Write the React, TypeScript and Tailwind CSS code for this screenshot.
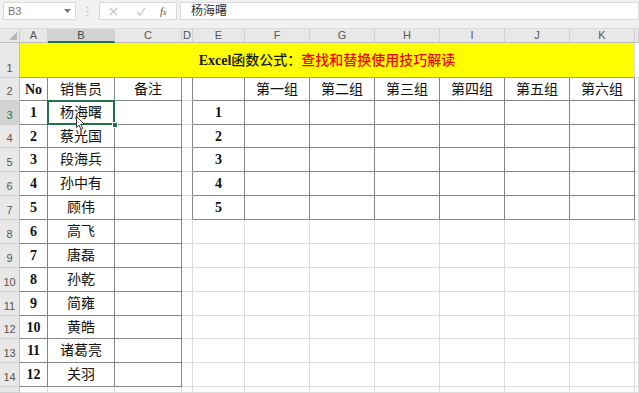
import React from "react";

const colW = [
  "w-[28px]",
  "w-[67px]",
  "w-[67px]",
  "w-[11px]",
  "w-[52px]",
  "w-[65px]",
  "w-[65px]",
  "w-[65px]",
  "w-[65px]",
  "w-[65px]",
  "w-[65px]",
  "w-[4px]",
];
const letters = ["A", "B", "C", "D", "E", "F", "G", "H", "I", "J", "K", ""];
const rowHeights = [23, 24, 23, 24, 24, 24, 24, 24, 24, 24, 23, 24, 24];
const names = [
  "杨海曙",
  "蔡光国",
  "段海兵",
  "孙中有",
  "顾伟",
  "高飞",
  "唐磊",
  "孙乾",
  "简雍",
  "黄皓",
  "诸葛亮",
  "关羽",
];
const groups = ["第一组", "第二组", "第三组", "第四组", "第五组", "第六组"];

const serif = "font-['Liberation_Serif','Noto_Sans_CJK_SC',serif]";
const sans = "font-['Liberation_Sans','Noto_Sans_CJK_SC',sans-serif]";

function cellContent(r: number, c: number): React.ReactNode {
  if (r === 2) {
    if (c === 0) return <span className="font-bold">No</span>;
    if (c === 1) return <span>销售员</span>;
    if (c === 2) return <span>备注</span>;
    if (c >= 5 && c <= 10) return <span>{groups[c - 5]}</span>;
    return null;
  }
  if (r >= 3 && r <= 14) {
    if (c === 0) return <span className="font-bold">{r - 2}</span>;
    if (c === 1) return <span>{names[r - 3]}</span>;
  }
  if (r >= 3 && r <= 7 && c === 4) return <span className="font-bold">{r - 2}</span>;
  return null;
}

function Cell({ r, c }: { r: number; c: number }) {
  const inLeft = c <= 2 && r >= 2 && r <= 14;
  const inRight = c >= 4 && c <= 10 && r >= 2 && r <= 7;
  const darkR = inLeft || inRight || (c === 3 && r >= 2 && r <= 7);
  const darkB = inLeft || inRight;
  const rCls = darkR ? "border-r-[#858585]" : "border-r-[#dcdcdc]";
  const bCls = darkB ? "border-b-[#858585]" : "border-b-[#dcdcdc]";
  const selected = r === 3 && c === 1;
  return (
    <div
      className={`${colW[c]} shrink-0 h-full border-r border-b ${rCls} ${bCls} flex items-center justify-center text-[14px] text-[#111] relative ${serif}`}
    >
      {cellContent(r, c)}
      {selected && (
        <>
          <div className="absolute left-[-1px] top-[-1px] right-[-1px] bottom-[-1px] border-2 border-[#217346] z-10" />
          <div className="absolute right-[-4px] bottom-[-4px] w-[6px] h-[6px] bg-[#217346] border border-white z-20" />
        </>
      )}
    </div>
  );
}

function RowHeader({ n, active }: { n: number | string; active?: boolean }) {
  return (
    <div
      className={`w-[20px] shrink-0 h-full border-r border-b border-r-[#bcbcbc] border-b-[#d0d0d0] flex items-end justify-center pb-[1px] text-[11px] ${sans} ${
        active ? "bg-[#d3d3d3] text-[#217346]" : "bg-[#e8e8e8] text-[#555]"
      }`}
    >
      {n}
    </div>
  );
}

function DataRow({ r, h }: { r: number; h: number }) {
  const hc = h === 23 ? "h-[23px]" : h === 24 ? "h-[24px]" : "h-[6px]";
  return (
    <div className={`flex ${hc}`}>
      <RowHeader n={r <= 14 ? r : ""} active={r === 3} />
      {colW.map((_, c) => (
        <Cell key={c} r={r} c={c} />
      ))}
    </div>
  );
}

export default function App() {
  return (
    <div className="w-[639px] h-[393px] overflow-hidden bg-white relative select-none">
      {/* formula bar */}
      <div className={`flex items-center h-[22px] bg-[#f1f1f1] ${sans}`}>
        <div className="ml-[3px] w-[73px] h-[18px] bg-white border border-[#dadada] flex items-center justify-between pl-[4px] pr-[4px]">
          <span className="text-[11px] text-[#777]">B3</span>
          <svg width="7" height="4" viewBox="0 0 7 4">
            <path d="M0 0 L7 0 L3.5 4 Z" fill="#777" />
          </svg>
        </div>
        <div className="w-[23px] flex items-center justify-center">
          <svg width="3" height="11" viewBox="0 0 3 11">
            <circle cx="1.5" cy="1.5" r="1" fill="#c4c4c4" />
            <circle cx="1.5" cy="5.5" r="1" fill="#c4c4c4" />
            <circle cx="1.5" cy="9.5" r="1" fill="#c4c4c4" />
          </svg>
        </div>
        <div className="w-[78px] h-[18px] bg-white border border-[#dadada] flex items-center">
          <svg className="ml-[9px]" width="9" height="9" viewBox="0 0 9 9">
            <path d="M1 1 L8 8 M8 1 L1 8" stroke="#c2c2c2" strokeWidth="1.2" />
          </svg>
          <svg className="ml-[18px]" width="10" height="9" viewBox="0 0 10 9">
            <path d="M1 5 L4 8 L9 1" stroke="#c2c2c2" strokeWidth="1.2" fill="none" />
          </svg>
          <span className="ml-[14px] text-[11px] italic text-[#555] font-['Liberation_Serif',serif]">
            f<span className="text-[8px]">x</span>
          </span>
        </div>
        <div className="ml-[3px] flex-1 h-[18px] bg-white border border-[#dadada] flex items-center pl-[10px]">
          <span className={`text-[12px] text-[#333] ${serif}`}>杨海曙</span>
        </div>
      </div>
      <div className="h-[7px] bg-[#f1f1f1] border-b border-[#dcdcdc]" />
      {/* column headers */}
      <div className={`flex h-[14px] ${sans}`}>
        <div className="w-[20px] shrink-0 h-full bg-[#e8e8e8] border-r border-b border-r-[#c8c8c8] border-b-[#bcbcbc] relative">
          <svg className="absolute right-[2px] bottom-[2px]" width="8" height="8" viewBox="0 0 8 8">
            <path d="M8 0 L8 8 L0 8 Z" fill="#b5b5b5" />
          </svg>
        </div>
        {colW.map((w, c) => (
          <div
            key={c}
            className={`${w} shrink-0 h-full border-r border-r-[#cfcfcf] flex items-center justify-center text-[11px] ${
              c === 1
                ? "bg-[#d3d3d3] text-[#444] border-b-2 border-b-[#217346]"
                : "bg-[#e8e8e8] text-[#555] border-b border-b-[#bcbcbc]"
            }`}
          >
            {letters[c]}
          </div>
        ))}
      </div>
      {/* row 1 */}
      <div className="flex h-[35px]">
        <RowHeader n={1} />
        <div
          className={`w-[615px] shrink-0 h-full bg-[#ffff00] border-b border-r border-b-[#a9a27a] border-r-[#dcdcdc] flex items-center justify-center text-[14px] ${serif}`}
        >
          <span className="text-[#1a1a1a] font-bold">Excel</span>
          <span className="text-[#1a1a1a] font-medium">函数公式：</span>
          <span className="text-[#ff0000] font-medium">查找和替换使用技巧解读</span>
        </div>
        <div className="w-[4px] shrink-0 h-full border-b border-b-[#dcdcdc]" />
      </div>
      {rowHeights.map((h, i) => (
        <DataRow key={i} r={i + 2} h={h} />
      ))}
      <DataRow r={15} h={6} />
      {/* mouse cursor */}
      <svg className="absolute left-[76px] top-[116px] z-30" width="10" height="15" viewBox="0 0 10 15">
        <path d="M0.5 0.5 L0.5 11.5 L3 9 L5 13.5 L6.8 12.7 L4.8 8.3 L8.3 8.3 Z" fill="white" stroke="#222" strokeWidth="0.9" />
      </svg>
    </div>
  );
}
